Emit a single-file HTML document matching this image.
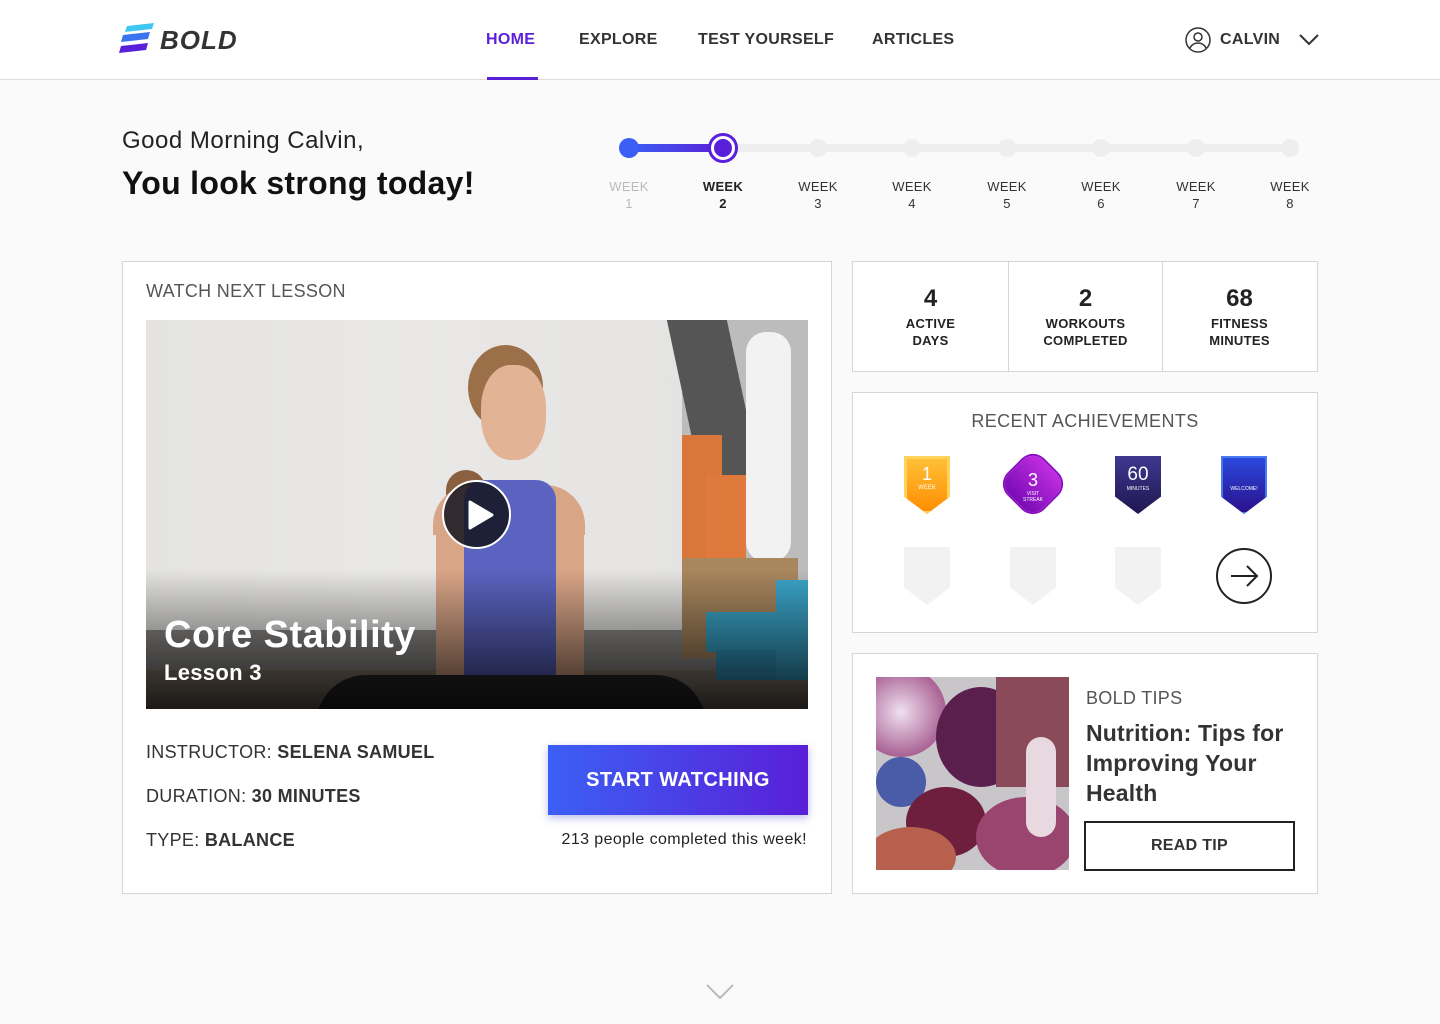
<!DOCTYPE html>
<html><head><meta charset="utf-8"><style>
*{margin:0;padding:0;box-sizing:border-box}
body{width:1440px;height:1024px;background:#fafafb;font-family:"Liberation Sans",sans-serif;color:#222;position:relative;overflow:hidden}
.abs{position:absolute}
header{position:absolute;left:0;top:0;width:1440px;height:80px;background:#fff;border-bottom:1px solid #ddd}
.nav{position:absolute;top:31px;font-size:16px;font-weight:bold;color:#333;letter-spacing:.3px}
.card{position:absolute;background:#fff;border:1px solid #d6d6d6}
.wk{position:absolute;top:178px;width:60px;margin-left:-30px;text-align:center;font-size:13px;line-height:17px;color:#333;letter-spacing:.3px}
.dot{position:absolute;top:139px;width:18px;height:18px;margin-left:-9px;border-radius:50%;background:#eee}
.stat{position:absolute;top:262px;width:155px;text-align:center}
.stat b{display:block;font-size:24px;margin-top:23px}
.stat span{display:block;font-size:13px;font-weight:bold;line-height:17px;margin-top:2px;letter-spacing:.3px}
.info{position:absolute;left:146px;font-size:18px;color:#333;letter-spacing:.3px}
.badge{position:absolute;width:46px;height:58px;clip-path:polygon(0 0,100% 0,100% 70%,50% 100%,0 70%)}
</style></head><body>
<header>
<svg class="abs" style="left:119px;top:23px" width="36" height="33"><polygon points="8,3 35,0 33,6 6,9" fill="#3fc7f2"/><polygon points="4,12 31,9 29,16 2,19" fill="#3b74f0"/><polygon points="2,23 29,20 27,27 0,30" fill="#5a1fd8"/></svg>
<div class="abs" style="left:160px;top:25px;font-size:26px;font-weight:bold;font-style:italic;color:#333;letter-spacing:1px">BOLD</div>
<div class="nav" style="left:486px;color:#5a1fd8">HOME</div>
<div class="abs" style="left:487px;top:77px;width:51px;height:3px;background:#5a1fd8"></div>
<div class="nav" style="left:579px">EXPLORE</div>
<div class="nav" style="left:698px">TEST YOURSELF</div>
<div class="nav" style="left:872px">ARTICLES</div>
<svg class="abs" style="left:1185px;top:27px" width="26" height="26" fill="none" stroke="#333" stroke-width="1.5"><circle cx="13" cy="13" r="12"/><circle cx="13" cy="10" r="4"/><path d="M5 21c2-4 5-5 8-5s6 1 8 5"/></svg>
<div class="nav" style="left:1220px">CALVIN</div>
<svg class="abs" style="left:1298px;top:33px" width="22" height="14" fill="none" stroke="#333" stroke-width="2"><path d="M2 2l9 9 9-9"/></svg>
</header>

<div class="abs" style="left:122px;top:127px;font-size:24px;color:#222;letter-spacing:.5px">Good Morning Calvin,</div>
<div class="abs" style="left:122px;top:165px;font-size:32px;font-weight:bold;color:#111;letter-spacing:.3px">You look strong today!</div>

<div class="abs" style="left:629px;top:144px;width:662px;height:8px;background:#eee;border-radius:4px"></div>
<div class="abs" style="left:629px;top:144px;width:94px;height:8px;background:linear-gradient(90deg,#3b5ff5,#5a1fd8)"></div>
<div class="dot" style="left:629px;background:#3b5ff5;width:20px;height:20px;margin-left:-10px;top:138px"></div>
<div class="abs" style="left:708px;top:133px;width:30px;height:30px;border-radius:50%;border:3px solid #5a1fd8;background:#fff"></div>
<div class="abs" style="left:714px;top:139px;width:18px;height:18px;border-radius:50%;background:#5a1fd8"></div>
<div class="dot" style="left:818px"></div><div class="dot" style="left:912px"></div><div class="dot" style="left:1007px"></div><div class="dot" style="left:1101px"></div><div class="dot" style="left:1196px"></div><div class="dot" style="left:1290px"></div>
<div class="wk" style="left:629px;color:#bbb">WEEK<br>1</div>
<div class="wk" style="left:723px;font-weight:bold;color:#222">WEEK<br>2</div>
<div class="wk" style="left:818px">WEEK<br>3</div>
<div class="wk" style="left:912px">WEEK<br>4</div>
<div class="wk" style="left:1007px">WEEK<br>5</div>
<div class="wk" style="left:1101px">WEEK<br>6</div>
<div class="wk" style="left:1196px">WEEK<br>7</div>
<div class="wk" style="left:1290px">WEEK<br>8</div>

<div class="card" style="left:122px;top:261px;width:710px;height:633px"></div>
<div class="abs" style="left:146px;top:281px;font-size:18px;color:#555;letter-spacing:.3px">WATCH NEXT LESSON</div>
<div class="abs" style="left:146px;top:320px;width:662px;height:389px;overflow:hidden;background:linear-gradient(90deg,#e4e3e1,#e9e8e6 40%,#e2e1df)">
 <div class="abs" style="left:0;top:310px;width:662px;height:40px;background:#8e8c8a"></div>
 <div class="abs" style="left:0;top:350px;width:662px;height:39px;background:#8a7d70"></div>
 <div class="abs" style="left:536px;top:0;width:126px;height:310px;background:#bcbcbc"></div>
 <div class="abs" style="left:540px;top:0;width:60px;height:180px;background:#555;transform:skewX(12deg)"></div>
 <div class="abs" style="left:600px;top:12px;width:45px;height:230px;background:#f2f2f2;border-radius:20px"></div>
 <div class="abs" style="left:536px;top:115px;width:40px;height:130px;background:#d9763a"></div>
 <div class="abs" style="left:560px;top:155px;width:40px;height:90px;background:#e07a3c"></div>
 <div class="abs" style="left:536px;top:238px;width:116px;height:100px;background:#a8865e"></div>
 <div class="abs" style="left:560px;top:292px;width:80px;height:40px;background:#3aa5c9"></div>
 <div class="abs" style="left:570px;top:330px;width:80px;height:30px;background:#3398bf"></div>
 <div class="abs" style="left:630px;top:260px;width:32px;height:100px;background:#3aa5c9"></div>
 <div class="abs" style="left:300px;top:150px;width:40px;height:70px;border-radius:30px;background:#8a6040"></div>
 <div class="abs" style="left:322px;top:25px;width:75px;height:85px;border-radius:50%;background:#9b7048"></div>
 <div class="abs" style="left:335px;top:45px;width:65px;height:95px;border-radius:45%;background:#e2b394"></div>
 <div class="abs" style="left:287px;top:165px;width:152px;height:50px;border-radius:40px 40px 0 0;background:#d9a587"></div>
 <div class="abs" style="left:290px;top:200px;width:28px;height:170px;background:#d9a587;border-radius:10px"></div>
 <div class="abs" style="left:410px;top:200px;width:28px;height:170px;background:#d9a587;border-radius:10px"></div>
 <div class="abs" style="left:318px;top:160px;width:92px;height:215px;border-radius:20px 20px 6px 6px;background:#5b63c0"></div>
 <div class="abs" style="left:170px;top:355px;width:390px;height:80px;border-radius:50px 50px 0 0;background:#2a2a2a"></div>
 <div class="abs" style="left:0;top:250px;width:662px;height:139px;background:linear-gradient(180deg,rgba(0,0,0,0),rgba(0,0,0,.8))"></div>
 <div class="abs" style="left:296px;top:160px;width:69px;height:69px;border-radius:50%;background:rgba(20,20,30,.85);border:2px solid #fff"></div>
 <svg class="abs" style="left:322px;top:180px" width="26" height="30"><polygon points="2,2 24,15 2,28" fill="#fff" stroke="#fff" stroke-linejoin="round" stroke-width="3"/></svg>
 <div class="abs" style="left:18px;top:294px;font-size:38px;font-weight:bold;color:#fff;letter-spacing:.5px">Core Stability</div>
 <div class="abs" style="left:18px;top:340px;font-size:22px;font-weight:bold;color:#fff;letter-spacing:.3px">Lesson 3</div>
</div>
<div class="info" style="top:742px">INSTRUCTOR: <b>SELENA SAMUEL</b></div>
<div class="info" style="top:786px">DURATION: <b>30 MINUTES</b></div>
<div class="info" style="top:830px">TYPE: <b>BALANCE</b></div>
<div class="abs" style="left:548px;top:745px;width:260px;height:70px;background:linear-gradient(90deg,#3b5ff5,#5a1fd8);box-shadow:0 3px 8px rgba(60,60,200,.35);color:#fff;font-size:20px;font-weight:bold;text-align:center;line-height:70px;letter-spacing:.4px">START WATCHING</div>
<div class="abs" style="left:520px;top:831px;width:287px;text-align:right;font-size:16px;color:#222;letter-spacing:.4px">213 people completed this week!</div>

<div class="card" style="left:852px;top:261px;width:466px;height:111px"></div>
<div class="abs" style="left:1008px;top:262px;width:1px;height:109px;background:#d6d6d6"></div>
<div class="abs" style="left:1162px;top:262px;width:1px;height:109px;background:#d6d6d6"></div>
<div class="stat" style="left:853px"><b>4</b><span>ACTIVE<br>DAYS</span></div>
<div class="stat" style="left:1008px"><b>2</b><span>WORKOUTS<br>COMPLETED</span></div>
<div class="stat" style="left:1162px"><b>68</b><span>FITNESS<br>MINUTES</span></div>

<div class="card" style="left:852px;top:392px;width:466px;height:241px"></div>
<div class="abs" style="left:852px;top:411px;width:466px;text-align:center;font-size:18px;color:#555;letter-spacing:.4px">RECENT ACHIEVEMENTS</div>
<div class="badge" style="left:904px;top:456px;background:linear-gradient(#ffc23a,#ff8c00);color:#fff;text-align:center;font-size:18px;padding-top:8px;box-shadow:inset 0 0 0 3px #ffd25a">1<div style="font-size:6px">WEEK</div></div>
<div class="abs" style="left:1009px;top:460px;width:48px;height:48px;border-radius:14px;transform:rotate(45deg);background:linear-gradient(#c02ee0,#7a0bb5);box-shadow:0 0 0 2px #8a10c0"></div>
<div class="abs" style="left:1009px;top:470px;width:48px;text-align:center;color:#fff;font-size:18px">3<div style="font-size:5px">VISIT<br>STREAK</div></div>
<div class="badge" style="left:1115px;top:456px;background:linear-gradient(#3f3890,#1f1650);color:#fff;text-align:center;font-size:19px;padding-top:8px">60<div style="font-size:5px">MINUTES</div></div>
<div class="badge" style="left:1221px;top:456px;background:linear-gradient(#2a4ae0,#2b108a);color:#fff;text-align:center;font-size:5px;padding-top:30px;box-shadow:inset 0 0 0 2px #4a7af0">WELCOME!</div>
<div class="badge" style="left:904px;top:547px;background:#f2f2f2"></div>
<div class="badge" style="left:1010px;top:547px;background:#f2f2f2"></div>
<div class="badge" style="left:1115px;top:547px;background:#f2f2f2"></div>
<svg class="abs" style="left:1215px;top:547px" width="58" height="58" fill="none" stroke="#222" stroke-width="2"><circle cx="29" cy="29" r="27"/><path d="M16 29h26M32 19l10 10-10 10"/></svg>

<div class="card" style="left:852px;top:653px;width:466px;height:241px"></div>
<div class="abs" style="left:876px;top:677px;width:193px;height:193px;overflow:hidden;background:#c9c6c9">
 <div class="abs" style="left:-20px;top:-10px;width:90px;height:90px;border-radius:50%;background:radial-gradient(#f0e0ef,#8a2b6e)"></div>
 <div class="abs" style="left:60px;top:10px;width:90px;height:100px;border-radius:50%;background:#5b1f4e"></div>
 <div class="abs" style="left:120px;top:0;width:80px;height:110px;background:#8a4a5a"></div>
 <div class="abs" style="left:0;top:80px;width:50px;height:50px;border-radius:50%;background:#4a5ba8"></div>
 <div class="abs" style="left:30px;top:110px;width:80px;height:70px;border-radius:50%;background:#6e1f3e"></div>
 <div class="abs" style="left:-10px;top:150px;width:90px;height:60px;border-radius:50%;background:#b8604e"></div>
 <div class="abs" style="left:100px;top:120px;width:100px;height:80px;border-radius:50%;background:#9a4570"></div>
 <div class="abs" style="left:150px;top:60px;width:30px;height:100px;border-radius:15px;background:#e8d8e0"></div>
</div>
<div class="abs" style="left:1086px;top:688px;font-size:18px;color:#555;letter-spacing:.3px">BOLD TIPS</div>
<div class="abs" style="left:1086px;top:718px;font-size:23px;font-weight:bold;line-height:30px;color:#333;letter-spacing:.2px">Nutrition: Tips for<br>Improving Your<br>Health</div>
<div class="abs" style="left:1084px;top:821px;width:211px;height:50px;border:2px solid #222;text-align:center;line-height:46px;font-size:16px;font-weight:bold;color:#333;letter-spacing:.3px">READ TIP</div>

<svg class="abs" style="left:705px;top:982px" width="30" height="18" fill="none" stroke="#bbb" stroke-width="2"><path d="M2 3l13 13 13-13"/></svg>
</body></html>
